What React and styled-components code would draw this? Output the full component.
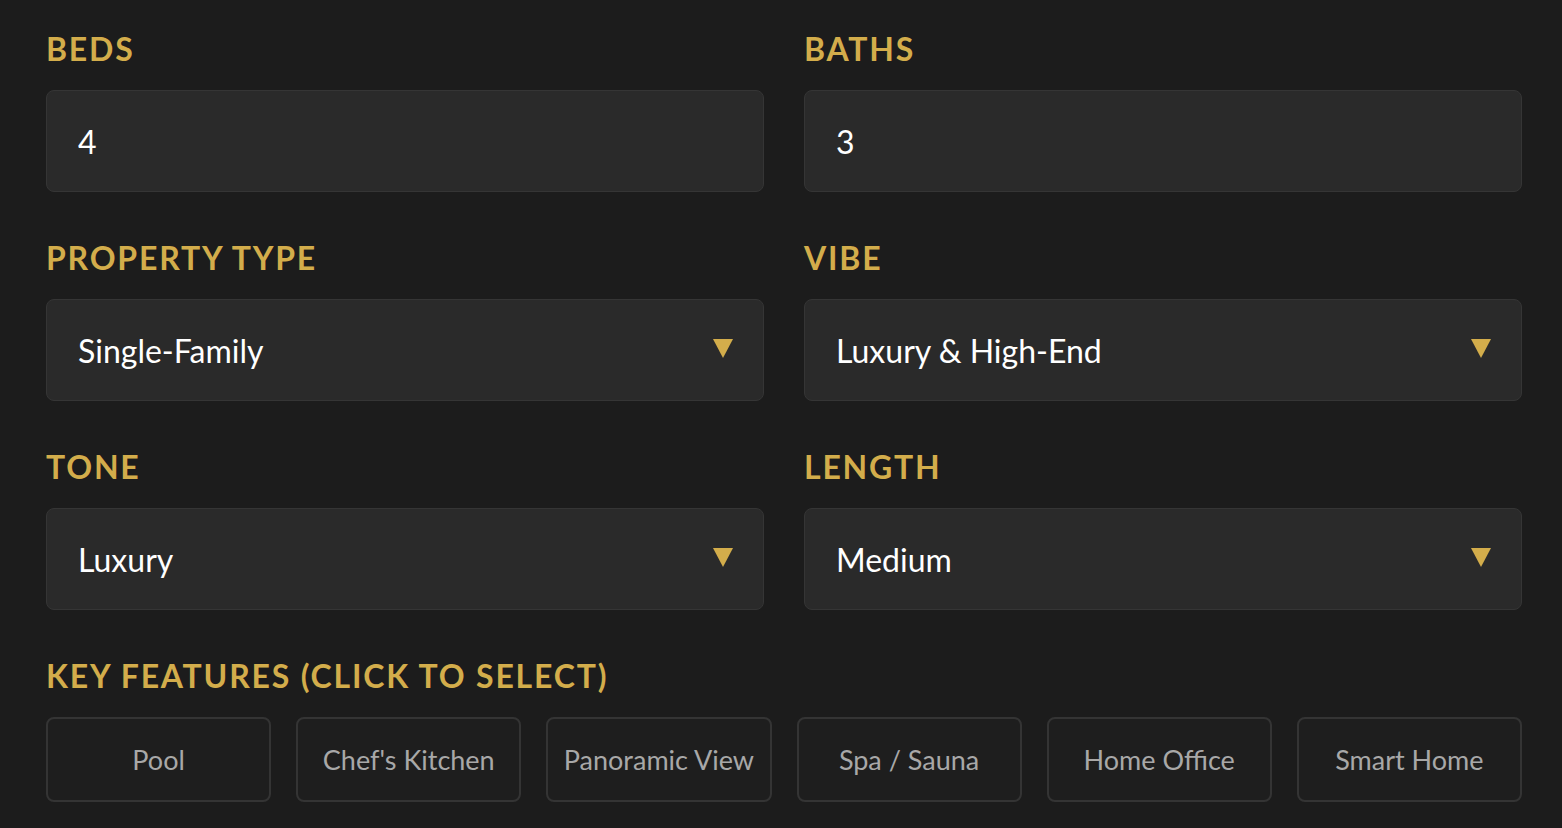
import React from "react";
import styled, { createGlobalStyle } from "styled-components";

const GlobalStyle = createGlobalStyle`
  html, body {
    margin: 0;
    padding: 0;
    background: #1c1c1c;
  }
  body {
    font-family: Lato, "Open Sans", sans-serif;
  }
`;

const Page = styled.div`
  padding: 30px 40px 20px 46px;
  display: flex;
  flex-direction: column;
  gap: 47px;
`;

const Row = styled.div`
  display: grid;
  grid-template-columns: 1fr 1fr;
  column-gap: 40px;
`;

const Field = styled.div`
  display: flex;
  flex-direction: column;
  gap: 22px;
`;

const Label = styled.div`
  font-size: 32px;
  font-weight: 700;
  letter-spacing: 1.8px;
  line-height: 38px;
  color: #d3ad4b;
  text-transform: uppercase;
`;

const Box = styled.div`
  height: 102px;
  box-sizing: border-box;
  background: #2a2a2a;
  border: 1.5px solid #353535;
  border-radius: 8px;
  display: flex;
  align-items: center;
  justify-content: space-between;
  padding: 0 30px 0 31px;
  font-size: 32px;
  color: #ffffff;
`;

const Arrow = styled.span`
  width: 0;
  height: 0;
  border-left: 10px solid transparent;
  border-right: 10px solid transparent;
  border-top: 19px solid #d3ad4b;
  margin-top: -4px;
`;

const Chips = styled.div`
  display: grid;
  grid-template-columns: repeat(6, 1fr);
  column-gap: 25px;
`;

const Chip = styled.div`
  height: 85px;
  box-sizing: border-box;
  border: 2px solid #343434;
  border-radius: 8px;
  background: #1e1e1e;
  display: flex;
  align-items: center;
  justify-content: center;
  font-size: 27px;
  color: #a8a8a8;
  white-space: nowrap;
`;

const fields = [
  [
    { label: "Beds", value: "4" },
    { label: "Baths", value: "3" },
  ],
  [
    { label: "Property Type", value: "Single-Family", select: true },
    { label: "Vibe", value: "Luxury & High-End", select: true },
  ],
  [
    { label: "Tone", value: "Luxury", select: true },
    { label: "Length", value: "Medium", select: true },
  ],
];

const features = [
  "Pool",
  "Chef's Kitchen",
  "Panoramic View",
  "Spa / Sauna",
  "Home Office",
  "Smart Home",
];

export default function App() {
  return (
    <>
      <GlobalStyle />
      <Page>
        {fields.map((row, i) => (
          <Row key={i}>
            {row.map((f) => (
              <Field key={f.label}>
                <Label>{f.label}</Label>
                <Box>
                  <span>{f.value}</span>
                  {f.select && <Arrow />}
                </Box>
              </Field>
            ))}
          </Row>
        ))}
        <Field>
          <Label>Key Features (click to select)</Label>
          <Chips>
            {features.map((f) => (
              <Chip key={f}>{f}</Chip>
            ))}
          </Chips>
        </Field>
      </Page>
    </>
  );
}
